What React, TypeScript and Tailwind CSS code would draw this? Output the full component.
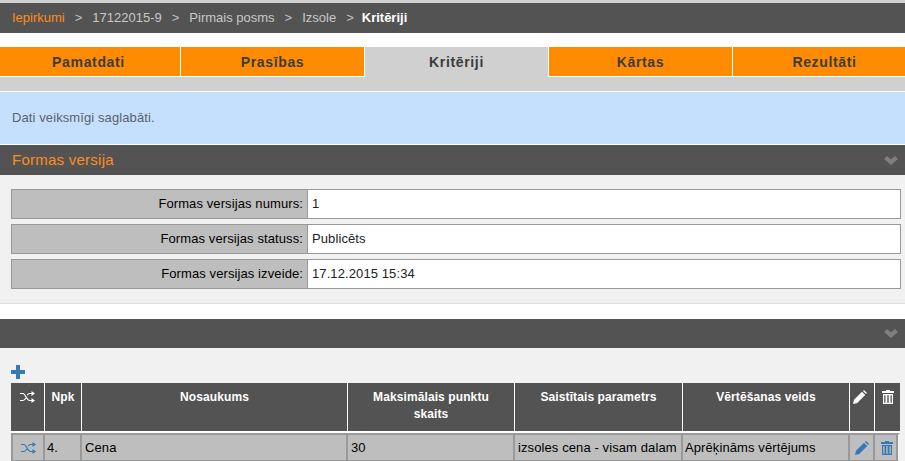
const tabs = ['Pamatdati', 'Prasības', 'Kritēriji', 'Kārtas', 'Rezultāti'];

const versionRows = [
  { label: 'Formas versijas numurs:', value: '1' },
  { label: 'Formas versijas statuss:', value: 'Publicēts' },
  { label: 'Formas versijas izveide:', value: '17.12.2015 15:34' },
];

function ChevronIcon() {
  return (
    <svg width="14" height="9" viewBox="0 0 14 9" className="text-[#7f7f7f]" fill="currentColor">
      <path d="M0 3l3-3 4 3.6L11 0l3 3-7 6z" />
    </svg>
  );
}

function PlusIcon() {
  return (
    <svg width="14" height="14" viewBox="0 0 14 14" className="text-[#337ab7]" fill="currentColor">
      <path d="M5 0h4v5h5v4H9v5H5V9H0V5h5z" />
    </svg>
  );
}

function ShuffleIcon({ className = '' }: { className?: string }) {
  return (
    <svg width="15" height="12" viewBox="0 0 15 12" className={className}>
      <path d="M0 2.5h3c2.5 0 3.5 7 6.5 7H12M0 9.5h3c1.2 0 2-1.2 2.7-2.6M7.3 4.2C8 3.2 8.6 2.5 9.5 2.5H12" fill="none" stroke="currentColor" strokeWidth="1.2" />
      <path d="M11.5 0 15 2.5 11.5 5zM11.5 7 15 9.5 11.5 12z" fill="currentColor" />
    </svg>
  );
}

function PencilIcon({ className = '' }: { className?: string }) {
  return (
    <svg width="14" height="14" viewBox="0 0 14 14" className={className} fill="currentColor">
      <path d="M0 14l1-4.2 8-8 3.2 3.2-8 8zM10 1l1-1 3 3-1 1z" />
    </svg>
  );
}

function TrashIcon({ className = '' }: { className?: string }) {
  return (
    <svg width="12" height="14" viewBox="0 0 12 14" className={className} fill="currentColor">
      <path d="M4 0h4v1h4v2H0V1h4z" />
      <path d="M1 4h10v10H1zm1.2 1.2v7.6h1.3V5.2zm3.1 0v7.6h1.4V5.2zm3.2 0v7.6h1.3V5.2z" fillRule="evenodd" />
    </svg>
  );
}

function Crumb({ children }: { children: string }) {
  return <span className="text-[#c8c8c8]">{children}</span>;
}

function Sep() {
  return <span className="mx-[10px] text-[#c0c0c0]">&gt;</span>;
}

function HeaderCell({ children, className = 'px-1' }: { children?: React.ReactNode; className?: string }) {
  return (
    <th className={`border-r border-b-2 border-white bg-[#535353] pt-[6px] align-top text-xs leading-[17px] font-bold tracking-[0.1px] text-white last:border-r-0 ${className}`}>
      {children}
    </th>
  );
}

function RowCell({ children, className = '' }: { children?: React.ReactNode; className?: string }) {
  return (
    <td className={`h-[29px] border-t-[2px] border-r-2 border-b-2 border-[#999999] bg-[#bebebe] text-[13px] tracking-[0.1px] whitespace-nowrap text-black ${className}`}>
      {children}
    </td>
  );
}

export default function App() {
  return (
    <div className="h-[461px] w-[905px] overflow-hidden bg-white font-['Liberation_Sans',Arial,sans-serif]">
      {/* Breadcrumb */}
      <div className="border-t-[3px] border-[#d0d0d0]">
        <div className="flex h-[30px] items-center bg-[#535353] pl-[12px] text-[13px]">
          <span className="text-[#ff8c1a]">Iepirkumi</span>
          <Sep />
          <Crumb>17122015-9</Crumb>
          <Sep />
          <Crumb>Pirmais posms</Crumb>
          <Sep />
          <Crumb>Izsole</Crumb>
          <Sep />
          <span className="-ml-[2px] font-bold text-white">Kritēriji</span>
        </div>
      </div>

      {/* Tabs */}
      <div className="mt-[14px] bg-[#d0d0d0] pb-[14px]">
        <div className="-ml-[3px] flex w-[920px]">
          {tabs.map((tab) => (
            <div
              key={tab}
              className={
                tab === 'Kritēriji'
                  ? 'flex h-[30px] w-[184px] items-center justify-center border-r border-white bg-[#d0d0d0] pb-[1px] text-sm font-bold tracking-[0.65px] text-[#3c3c3c]'
                  : 'flex h-[30px] w-[184px] items-center justify-center border-r border-b border-white bg-[#ff8c00] text-sm font-bold tracking-[0.65px] text-[#3c3c3c]'
              }
            >
              {tab}
            </div>
          ))}
        </div>
      </div>

      {/* Notice */}
      <div className="flex h-[54px] items-center border-y border-white bg-[#c5e0fd] pl-[12px] text-[13px] tracking-[0.1px] text-[#5a6270]">
        Dati veiksmīgi saglabāti.
      </div>

      {/* Formas versija */}
      <div className="flex h-[30px] items-center justify-between bg-[#535353] pr-[7px] pl-[12px] text-[15px] tracking-[0.25px] text-[#ff8c1a]">
        <span className="pt-[1px]">Formas versija</span>
        <ChevronIcon />
      </div>
      <div className="flex flex-col gap-[5px] border-b border-[#dddddd] bg-[#f1f1f1] pt-[14px] pr-[4px] pb-[14px] pl-[11px]">
        {versionRows.map((row) => (
          <div key={row.label} className="flex h-[30px] border border-[#999999] text-[13px] tracking-[0.1px]">
            <div className="flex w-[296px] items-center justify-end border-r border-[#999999] bg-[#bebebe] pr-[4px] text-black">
              {row.label}
            </div>
            <div className="flex flex-1 items-center bg-white pl-[4px] text-[#222222]">{row.value}</div>
          </div>
        ))}
      </div>

      {/* Kriteriji */}
      <div className="mt-[15px] flex h-[29px] items-center justify-end bg-[#535353] pr-[7px]">
        <ChevronIcon />
      </div>
      <div className="h-[113px] bg-[#f1f1f1] pt-[17px] pl-[11px]">
        <div className="mb-[4px]">
          <PlusIcon />
        </div>
        <table className="w-[889px] table-fixed border-separate border-spacing-0">
          <colgroup>
            <col className="w-[34px]" />
            <col className="w-[37px]" />
            <col className="w-[266px]" />
            <col className="w-[167px]" />
            <col className="w-[168px]" />
            <col className="w-[167px]" />
            <col className="w-[25px]" />
            <col className="w-[25px]" />
          </colgroup>
          <thead>
            <tr className="h-[50px]">
              <HeaderCell><ShuffleIcon className="mx-auto mt-[2px]" /></HeaderCell>
              <HeaderCell>Npk</HeaderCell>
              <HeaderCell>Nosaukums</HeaderCell>
              <HeaderCell className="px-6">Maksimālais punktu skaits</HeaderCell>
              <HeaderCell>Saistītais parametrs</HeaderCell>
              <HeaderCell>Vērtēšanas veids</HeaderCell>
              <HeaderCell><PencilIcon className="-ml-[1px] mt-[1px]" /></HeaderCell>
              <HeaderCell><TrashIcon className="mx-auto mt-[1px]" /></HeaderCell>
            </tr>
          </thead>
          <tbody>
            <tr>
              <RowCell className="border-l-2"><ShuffleIcon className="mx-auto text-[#337ab7]" /></RowCell>
              <RowCell className="pl-[2px]">4.</RowCell>
              <RowCell className="pl-[3px]">Cena</RowCell>
              <RowCell className="pl-[3px]">30</RowCell>
              <RowCell className="pl-[3px]">izsoles cena - visam dalam</RowCell>
              <RowCell className="pl-[2px]">Aprēķināms vērtējums</RowCell>
              <RowCell><PencilIcon className="mx-auto text-[#337ab7]" /></RowCell>
              <RowCell className="border-r-transparent bg-clip-padding shadow-[inset_-2px_0_0_#999999]"><TrashIcon className="mx-auto text-[#337ab7]" /></RowCell>
            </tr>
          </tbody>
        </table>
      </div>
    </div>
  );
}
